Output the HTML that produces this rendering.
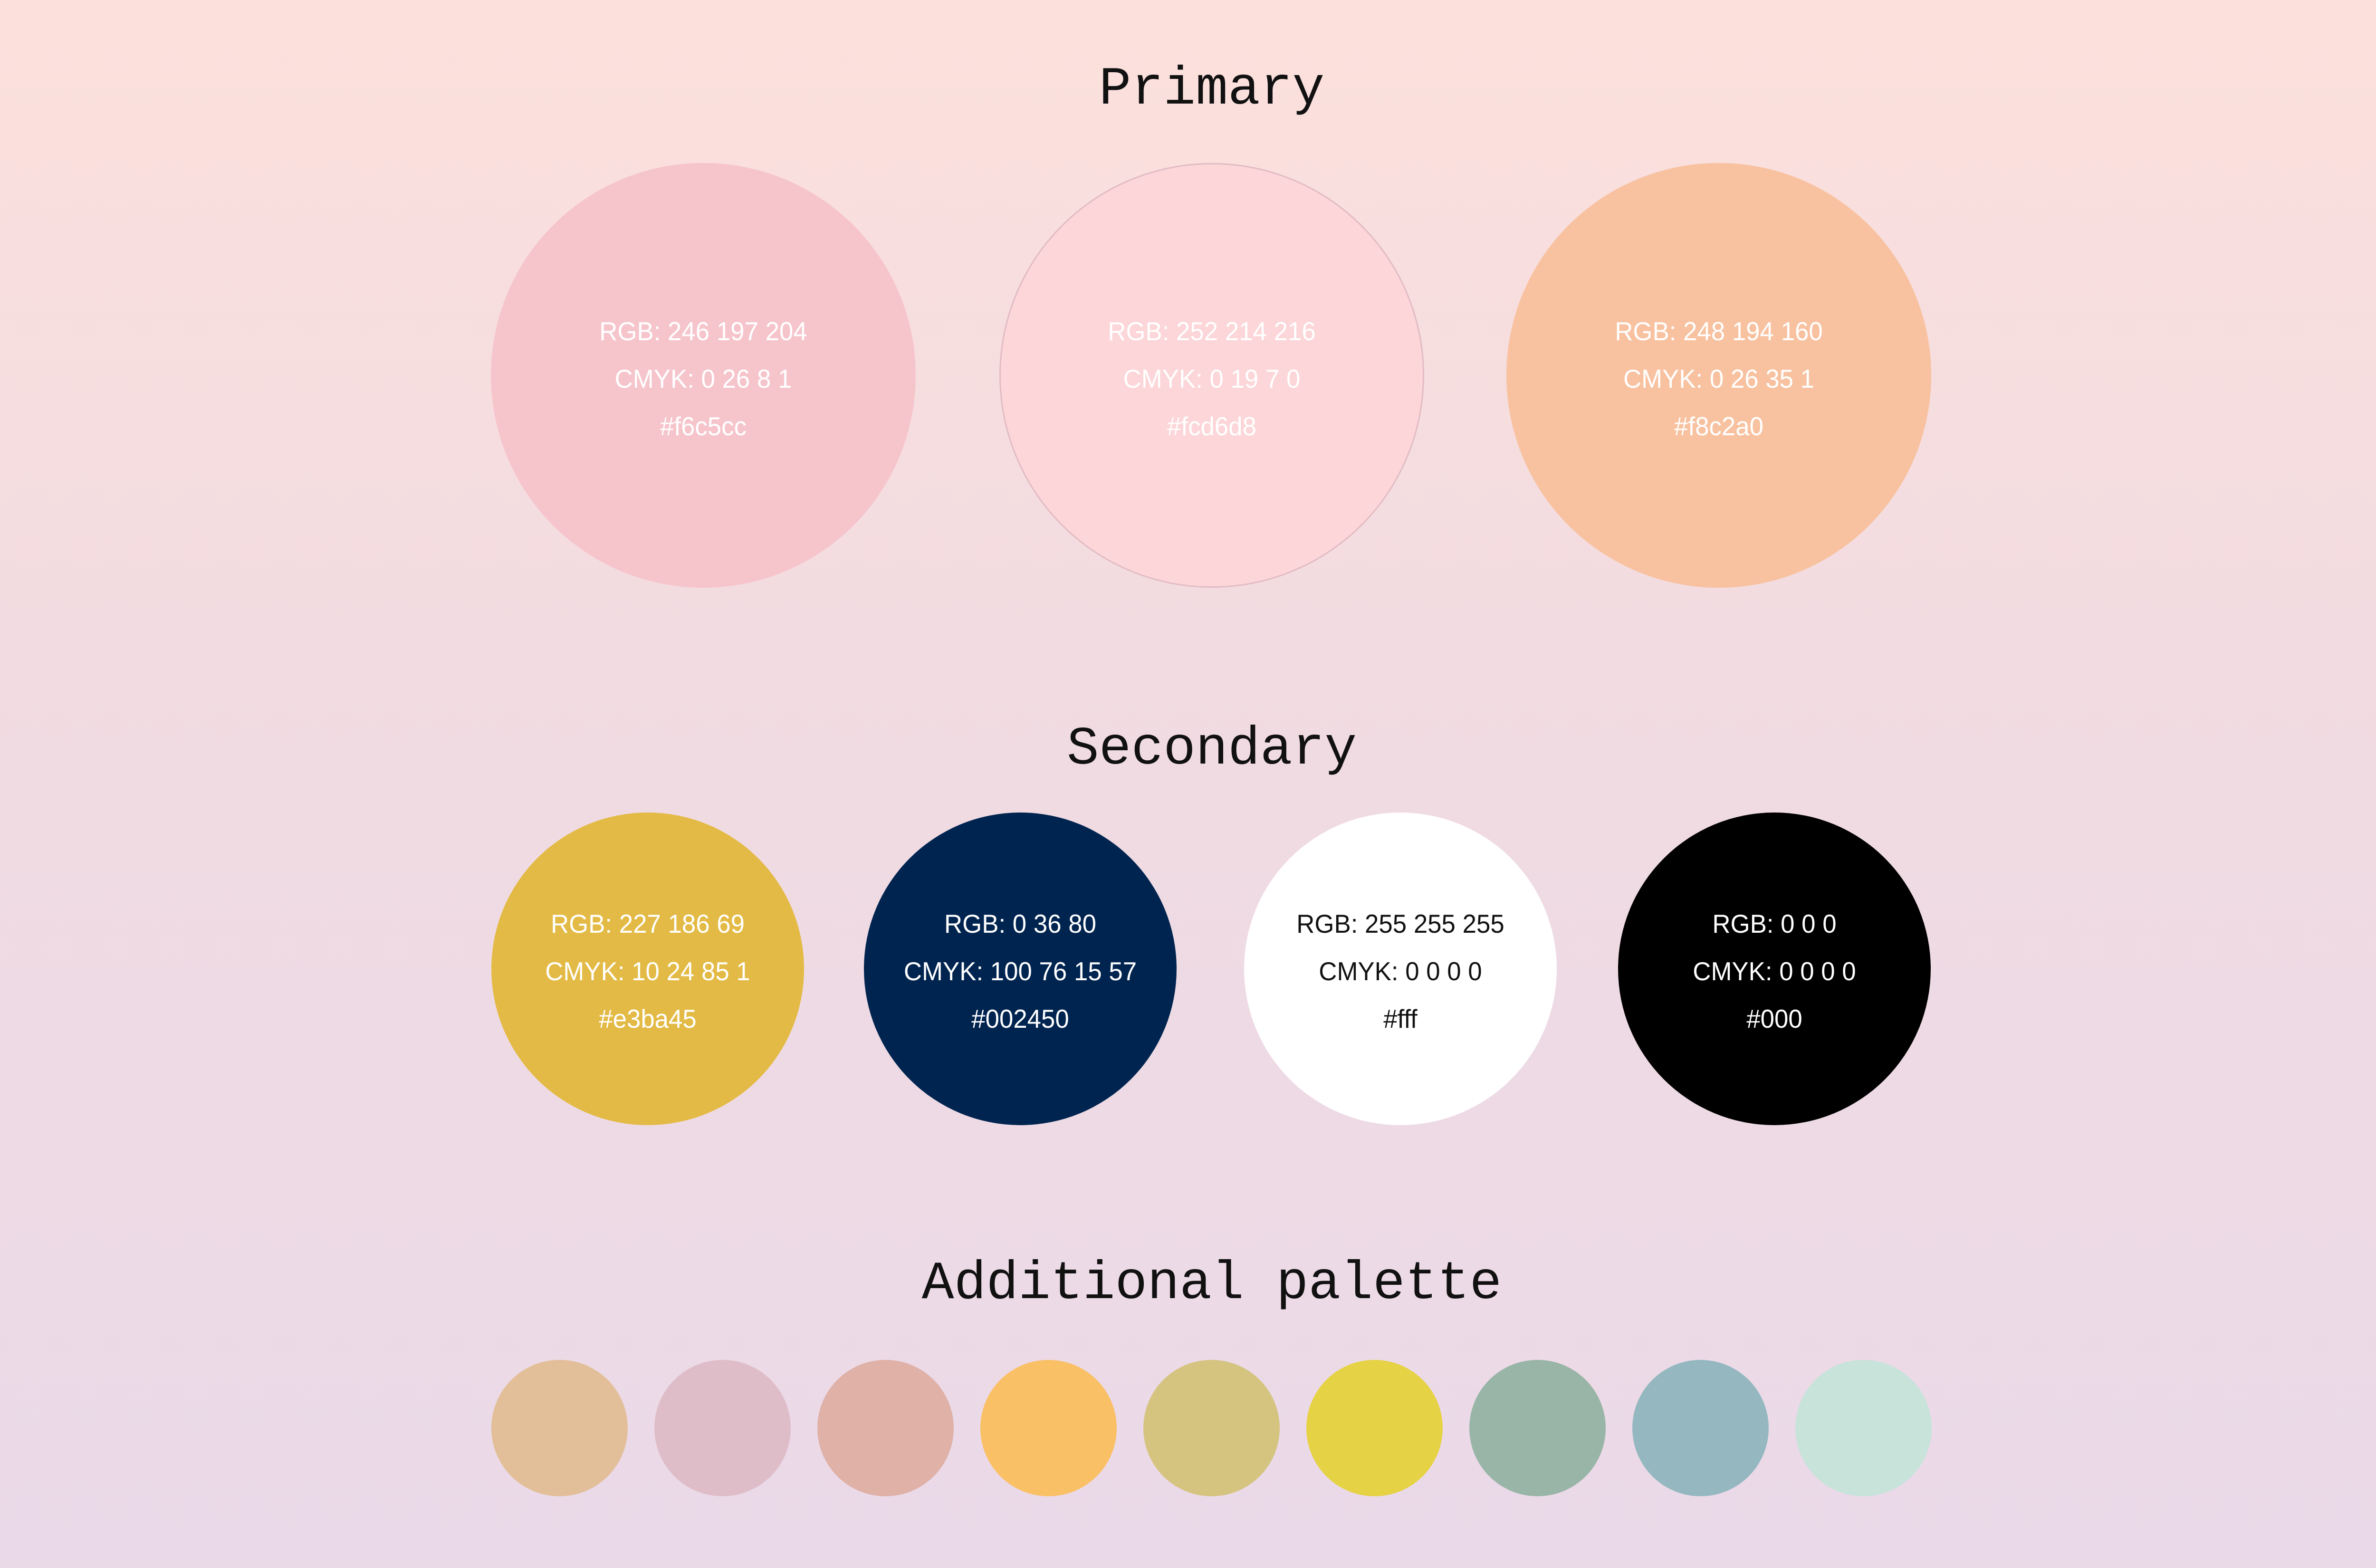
<!DOCTYPE html>
<html><head><style>
html,body{margin:0;padding:0}
body{width:5100px;height:3300px;position:relative;overflow:hidden;background:linear-gradient(#fce0dc,#f0dbe2 50%,#ead9e8)}
.t{position:absolute;left:0;width:5100px;text-align:center;font-family:"Liberation Mono",monospace;font-size:113px;color:#111;line-height:1}
.c{position:absolute;border-radius:50%;box-sizing:border-box}
.l{position:absolute;left:0;width:100%;text-align:center;font-family:"Liberation Sans",sans-serif;font-size:55px;line-height:56px;color:#fff;transform:scaleX(0.96)}
</style></head><body>
<div class="t" style="top:132px">Primary</div>
<div class="t" style="top:1521px">Secondary</div>
<div class="t" style="top:2646px">Additional palette</div>

<div class="c" style="left:1033px;top:343px;width:894px;height:894px;background:#f6c5cc">
<div class="l" style="top:326px">RGB: 246 197 204</div><div class="l" style="top:426px">CMYK: 0 26 8 1</div><div class="l" style="top:526px">#f6c5cc</div></div>
<div class="c" style="left:2103px;top:343px;width:894px;height:894px;background:#fcd6d8;border:3px solid #e2bcc4">
<div class="l" style="top:323px">RGB: 252 214 216</div><div class="l" style="top:423px">CMYK: 0 19 7 0</div><div class="l" style="top:523px">#fcd6d8</div></div>
<div class="c" style="left:3170px;top:343px;width:894px;height:894px;background:#f8c2a0">
<div class="l" style="top:326px">RGB: 248 194 160</div><div class="l" style="top:426px">CMYK: 0 26 35 1</div><div class="l" style="top:526px">#f8c2a0</div></div>

<div class="c" style="left:1034px;top:1710px;width:658px;height:658px;background:#e3ba45">
<div class="l" style="top:206px">RGB: 227 186 69</div><div class="l" style="top:306px">CMYK: 10 24 85 1</div><div class="l" style="top:406px">#e3ba45</div></div>
<div class="c" style="left:1818px;top:1710px;width:658px;height:658px;background:#002450">
<div class="l" style="top:206px">RGB: 0 36 80</div><div class="l" style="top:306px">CMYK: 100 76 15 57</div><div class="l" style="top:406px">#002450</div></div>
<div class="c" style="left:2618px;top:1710px;width:658px;height:658px;background:#fff">
<div class="l" style="top:206px;color:#111">RGB: 255 255 255</div><div class="l" style="top:306px;color:#111">CMYK: 0 0 0 0</div><div class="l" style="top:406px;color:#111">#fff</div></div>
<div class="c" style="left:3405px;top:1710px;width:658px;height:658px;background:#000">
<div class="l" style="top:206px">RGB: 0 0 0</div><div class="l" style="top:306px">CMYK: 0 0 0 0</div><div class="l" style="top:406px">#000</div></div>

<div class="c" style="left:1034px;top:2862px;width:287px;height:287px;background:#e2bf98"></div>
<div class="c" style="left:1377px;top:2862px;width:287px;height:287px;background:#dfbdc8"></div>
<div class="c" style="left:1720px;top:2862px;width:287px;height:287px;background:#dfb1a7"></div>
<div class="c" style="left:2063px;top:2862px;width:287px;height:287px;background:#f9c066"></div>
<div class="c" style="left:2406px;top:2862px;width:287px;height:287px;background:#d5c47f"></div>
<div class="c" style="left:2749px;top:2862px;width:287px;height:287px;background:#e6d245"></div>
<div class="c" style="left:3092px;top:2862px;width:287px;height:287px;background:#99b5a7"></div>
<div class="c" style="left:3435px;top:2862px;width:287px;height:287px;background:#95b8c0"></div>
<div class="c" style="left:3778px;top:2862px;width:287px;height:287px;background:#c7e3da"></div>
</body></html>
